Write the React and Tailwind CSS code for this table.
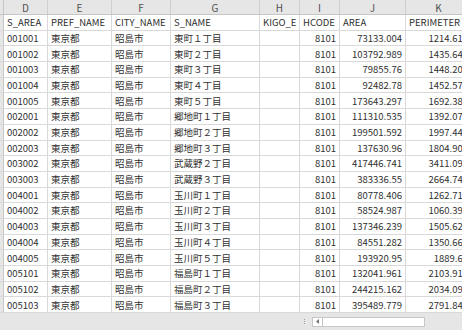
import React from "react";

const cols = [
    { key: "D", w: "w-[44px]" },
    { key: "E", w: "w-[64px]" },
    { key: "F", w: "w-[59px]" },
    { key: "G", w: "w-[89px]" },
    { key: "H", w: "w-[40px]" },
    { key: "I", w: "w-[40px]" },
    { key: "J", w: "w-[66px]" },
    { key: "K", w: "w-[66px]" },
];

const fields = ["S_AREA", "PREF_NAME", "CITY_NAME", "S_NAME", "KIGO_E", "HCODE", "AREA", "PERIMETER"];

const rows = [
    ["001001", "東町１丁目", "73133.004", "1214.613"],
    ["001002", "東町２丁目", "103792.989", "1435.647"],
    ["001003", "東町３丁目", "79855.76", "1448.205"],
    ["001004", "東町４丁目", "92482.78", "1452.579"],
    ["001005", "東町５丁目", "173643.297", "1692.381"],
    ["002001", "郷地町１丁目", "111310.535", "1392.075"],
    ["002002", "郷地町２丁目", "199501.592", "1997.446"],
    ["002003", "郷地町３丁目", "137630.96", "1804.903"],
    ["003002", "武蔵野２丁目", "417446.741", "3411.092"],
    ["003003", "武蔵野３丁目", "383336.55", "2664.742"],
    ["004001", "玉川町１丁目", "80778.406", "1262.717"],
    ["004002", "玉川町２丁目", "58524.987", "1060.397"],
    ["004003", "玉川町３丁目", "137346.239", "1505.622"],
    ["004004", "玉川町４丁目", "84551.282", "1350.665"],
    ["004005", "玉川町５丁目", "193920.95", "1889.62"],
    ["005101", "福島町１丁目", "132041.961", "2103.913"],
    ["005102", "福島町２丁目", "244215.162", "2034.093"],
    ["005103", "福島町３丁目", "395489.779", "2791.842"],
];

function Cell({ w, right, children }) {
    return (
        <div
            className={`${w} shrink-0 h-full border-r border-[#d9d9d9] flex items-center overflow-hidden whitespace-nowrap ${
                right ? "justify-end pr-[3px]" : "pl-[3px]"
            }`}
        >
            {children}
        </div>
    );
}

function Row({ values, numeric }) {
    return (
        <div className="flex h-[15.7px] border-b border-[#d9d9d9] bg-white">
            <div className="w-[4px] shrink-0 h-full bg-[#e6e6e6] border-r border-[#c6c6c6]" />
            {cols.map((c, i) => (
                <Cell key={c.key} w={c.w} right={numeric && i >= 5}>
                    {values[i]}
                </Cell>
            ))}
        </div>
    );
}

export default function App() {
    return (
        <div
            className="w-[462px] h-[330px] overflow-hidden bg-white text-[9.5px] text-[#303030] flex flex-col"
            style={{ fontFamily: '"Noto Sans CJK JP", sans-serif' }}
        >
            {/* column letters */}
            <div className="flex h-[15px] shrink-0 bg-[#e6e6e6] border-b border-[#c6c6c6] text-[#505050] text-[10px]">
                <div className="w-[4px] shrink-0 border-r border-[#c6c6c6]" />
                {cols.map((c) => (
                    <div key={c.key} className={`${c.w} shrink-0 border-r border-[#cfcfcf] flex items-center justify-center`}>
                        {c.key}
                    </div>
                ))}
            </div>

            {/* sheet */}
            <div className="flex flex-col shrink-0">
                <Row values={fields} />
                {rows.map((r) => (
                    <Row key={r[0]} numeric values={[r[0], "東京都", "昭島市", r[1], "", "8101", r[2], r[3]]} />
                ))}
            </div>

            {/* bottom bar */}
            <div className="flex-1 bg-[#e6e6e6] flex items-center">
                <div className="ml-[304px] flex flex-col gap-[1px]">
                    <span className="w-[1px] h-[1px] bg-[#999]" />
                    <span className="w-[1px] h-[1px] bg-[#999]" />
                    <span className="w-[1px] h-[1px] bg-[#999]" />
                </div>
                <div className="ml-[7px] w-[113px] h-[10px] bg-white border border-[#c6c6c6] flex items-center">
                    <div className="w-[10px] h-full border-r border-[#c6c6c6] flex items-center justify-center">
                        <svg width="4" height="5" viewBox="0 0 4 5">
                            <path d="M3 0 L0 2.5 L3 5 Z" fill="#777" />
                        </svg>
                    </div>
                </div>
            </div>
        </div>
    );
}
